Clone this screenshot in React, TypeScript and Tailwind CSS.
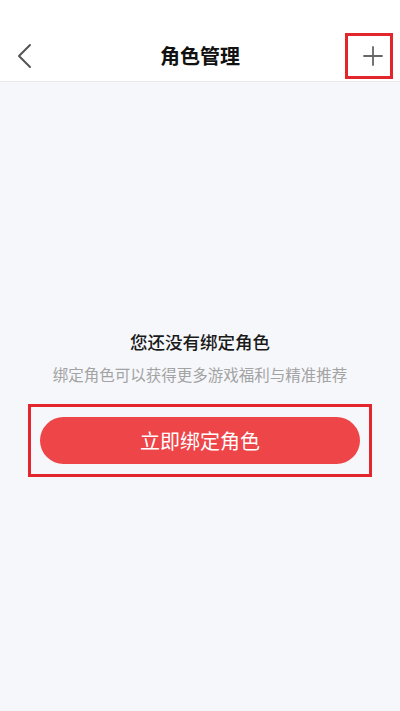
export default function App() {
  return (
    <div
      className="w-[400px] h-[711px] flex flex-col bg-[#f6f7fb] overflow-hidden"
      style={{ fontFamily: '"Noto Sans CJK SC", "Noto Sans", sans-serif' }}
    >
      {/* 顶部导航 */}
      <div className="h-[82px] bg-white border-b border-[#e9e9ec] pt-[30px] shrink-0">
        <div className="h-[51px] grid grid-cols-[1fr_auto_1fr] items-center">
          <div className="pl-[16px] flex items-center">
            <svg width="18" height="26" viewBox="0 0 18 26" fill="none">
              <path d="M14 2 L3 13 L14 24" stroke="#555" strokeWidth="2" strokeLinecap="round" strokeLinejoin="round" />
            </svg>
          </div>
          <h1 className="text-[20px] font-bold text-[#111] leading-none">角色管理</h1>
          <div className="flex justify-end pr-[7px]">
            <div className="w-[48px] h-[46px] border-[3px] border-[#e3262c] flex items-center justify-center pl-[7px]">
              <svg width="20" height="20" viewBox="0 0 20 20" fill="none">
                <path d="M10 1 V19 M1 10 H19" stroke="#666" strokeWidth="1.8" strokeLinecap="round" />
              </svg>
            </div>
          </div>
        </div>
      </div>

      {/* 空状态 */}
      <div className="flex flex-col items-center pt-[248px]">
        <p className="text-[17.5px] font-medium text-[#1a1a1a] leading-[24px]">您还没有绑定角色</p>
        <p className="mt-[9px] text-[15.5px] text-[#a3a3a3] leading-[22px]">绑定角色可以获得更多游戏福利与精准推荐</p>
        <div className="mt-[19px] w-[344px] border-[3px] border-[#e3262c] px-[9px] py-[10px]">
          <button className="w-full h-[47px] rounded-full bg-[#ee4548] text-white text-[20px] leading-none">
            立即绑定角色
          </button>
        </div>
      </div>
    </div>
  );
}
